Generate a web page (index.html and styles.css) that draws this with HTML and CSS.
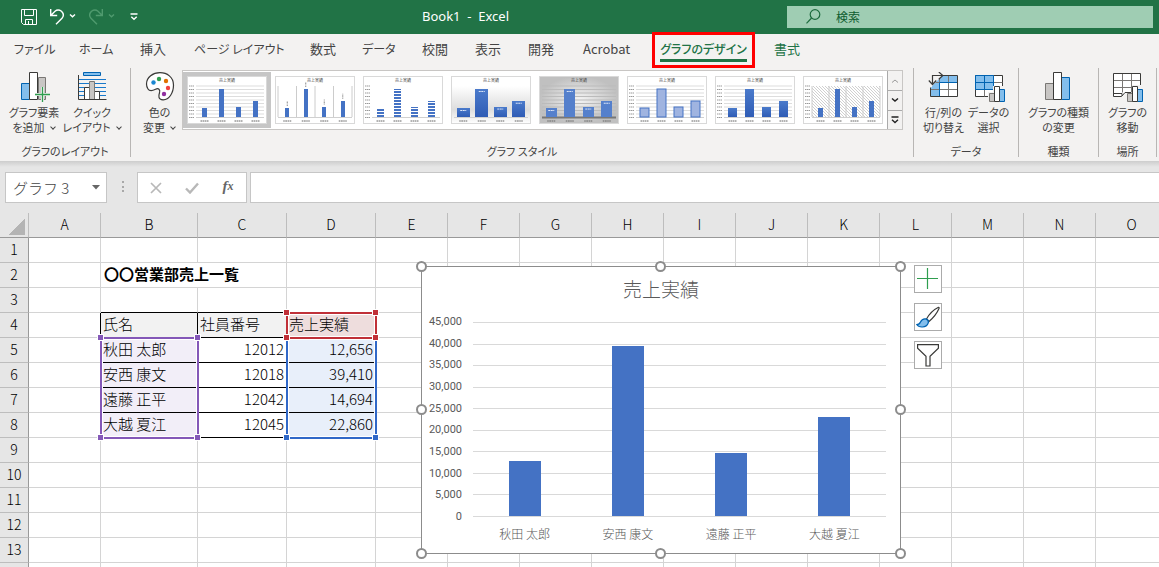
FILE: index.html
```html
<!DOCTYPE html>
<html lang="ja">
  <head>
    <meta charset="UTF-8" />
    <meta name="viewport" content="width=device-width, initial-scale=1.0" />
    <title>Book1 - Excel</title>
    <link rel="stylesheet" href="styles.css">
  </head>
  <body>
    <header class="titlebar">
      <div class="quick">
        <button aria-label="上書き保存"><svg width="16" height="16" viewBox="0 0 16 16" fill="none" stroke="#fff"><path d="M.5.5h15v15h-13l-2-2zM3.500.5v6h9v-6M4.500 15.500v-5h7v5M7.500 12v3"/></svg></button>
        <button aria-label="元に戻す"><svg width="26" height="16" viewBox="0 0 26 16" fill="none" stroke="#fff" stroke-width="1.400"><path d="M.7 0v6.500h6.500M1 6.200l4-4q3-2.500 6.500 0 3.500 3.500.5 7l-6 6M20 5.500l2.500 2.300 2.500-2.300"/></svg></button>
        <button aria-label="やり直し" disabled><svg width="26" height="16" viewBox="0 0 26 16" fill="none" stroke="#4f9a6e" stroke-width="1.400"><path d="M13.300 0v6.500H6.800M13 6.200l-4-4q-3-2.500-6.500 0-3.500 3.500-.5 7l6 6M20 5.500l2.500 2.300 2.500-2.300"/></svg></button>
        <button aria-label="クイック アクセス ツール バーのユーザー設定"><svg width="8" height="8" viewBox="0 0 8 8" fill="none" stroke="#fff" stroke-width="1.400"><path d="M.5 1h7M1.300 3.700L4 6.200l2.700-2.500"/></svg></button>
      </div>
      <div class="book">Book1&nbsp; -&nbsp; Excel</div>
      <label class="search">
        <svg width="15" height="15" viewBox="0 0 15 15" fill="none" stroke="#1c6b3d" stroke-width="1.200"><circle cx="9" cy="5.500" r="4.800"/><path d="M5.600 9L.5 14.300"/></svg>
        <input type="text" placeholder="検索" aria-label="検索">
      </label>
    </header>

    <nav class="tabs">
      <a href="#" class="kana">ファイル</a>
      <a href="#" class="kana">ホーム</a>
      <a href="#">挿入</a>
      <a href="#" class="kana">ページ レイアウト</a>
      <a href="#">数式</a>
      <a href="#" class="kana">データ</a>
      <a href="#">校閲</a>
      <a href="#">表示</a>
      <a href="#">開発</a>
      <a href="#">Acrobat</a>
      <a href="#" class="kana active"><span>グラフのデザイン</span></a>
      <a href="#" class="context">書式</a>
    </nav>

    <section class="ribbon">
      <div class="group layout">
        <div class="tools">
          <button class="tool">
            <svg width="32" height="30" viewBox="0 0 32 30"><path d="M20.500 5.500h7v22h-7z" fill="#c8c6c4" stroke="#797774"/><path d="M3.500 11.500h8v16h-8z" fill="#83beec" stroke="#0063b1"/><path d="M11.500.5h8v27h-8z" fill="#fff" stroke="#3a3a38"/><path d="M24.500 15v15M17 22.500h15" stroke="#f3f2f1" stroke-width="3"/><path d="M24.500 15v15M17 22.500h15" stroke="#2f9e4f" stroke-width="1.300"/></svg>
            <span>グラフ要素<br>を追加<i class="chev"></i></span>
          </button>
          <button class="tool">
            <svg width="32" height="30" viewBox="0 0 32 30" fill="none"><path d="M7.500.5h17v3h-17z" fill="#83beec" stroke="#0063b1"/><path d="M3 7.500h27M3 11.500h27M3 15.500h27M3 19.500h27M3 23.500h27" stroke="#1979ca"/><path d="M8.500 15.500h5v12h-5zM18.500 19.500h5v8h-5z" fill="#fff" stroke="#3a3a38"/><path d="M13.500 9.500h5v18h-5z" fill="#c8c6c4" stroke="#797774"/><path d="M2.500 3v24.500h28" stroke="#3a3a38"/></svg>
            <span>クイック<br>レイアウト<i class="chev"></i></span>
          </button>
        </div>
        <div class="caption">グラフのレイアウト</div>
      </div>

      <div class="group styles">
        <div class="tools">
          <button class="tool">
            <svg width="30" height="30" viewBox="0 0 30 30"><path d="M1.500 12C1.500 5 8 .7 15 .7S28.500 5 28.500 13c0 8-4.500 15-10.500 14.800-5-.3-4.500-4-3.500-7 1-3.500-1-5-4-3.500-3.500 1.800-6 2-7.500-.3-1-1.500-1.500-3.200-1.500-5z" fill="#fff" stroke="#3a3a38" stroke-width="1.200"/><circle cx="8.500" cy="10.500" r="2.200" fill="#1b87d1"/><circle cx="14" cy="7" r="2.200" fill="#2f9e4f"/><circle cx="21" cy="9" r="2.200" fill="#e07000"/><circle cx="23" cy="16" r="2.200" fill="#f04040"/><circle cx="19" cy="22" r="2.200" fill="#9030a0"/></svg>
            <span>色の<br>変更<i class="chev"></i></span>
          </button>
          <div class="gallery">
            <div class="thumbs" id="thumbs"></div>
            <div class="scroller">
              <button disabled aria-label="前の行"><svg width="8" height="8" viewBox="0 0 8 8" fill="none" stroke="#999"><path d="M1 5.500l3-2.500 3 2.500"/></svg></button>
              <button aria-label="次の行"><svg width="8" height="8" viewBox="0 0 8 8" fill="none" stroke="#222" stroke-width="1.500"><path d="M1 2.500L4 5l3-2.500"/></svg></button>
              <button aria-label="その他"><svg width="8" height="8" viewBox="0 0 8 8" fill="none" stroke="#222" stroke-width="1.300"><path d="M.5 1h7M1 3.700L4 6.500l3-2.800"/></svg></button>
            </div>
          </div>
        </div>
        <div class="caption">グラフ スタイル</div>
      </div>

      <div class="group data">
        <div class="tools">
          <button class="tool">
            <svg width="32" height="30" viewBox="0 0 32 30" fill="none"><path d="M2.500 3.500h27v21h-27z" fill="#fff"/><path d="M2.500 24.500v-8l9-13h18v7h-18v14z" fill="#83beec"/><path d="M11.500 3.500v21M20.500 3.500v21M2.500 10.500h27M2.500 17.500h27" stroke="#797774"/><path d="M11.500 24.500v-14h18" stroke="#0063b1"/><path d="M2.500 12v12.500h27v-21H12" stroke="#3a3a38"/><path d="M0 0h16v2L2 16H0z" fill="#f3f2f1"/><path d="M4.500 12V3.500h10M.8 8.500l3.700 4 3.700-4M10.800 0l4 3.500-4 3.700" stroke="#3a3a38" stroke-width="1.200"/></svg>
            <span>行/列の<br>切り替え</span>
          </button>
          <button class="tool">
            <svg width="32" height="30" viewBox="0 0 32 30" fill="none"><path d="M2.500 3.500h27v21h-27z" fill="#fff" stroke="#3a3a38"/><path d="M2.500 3.500h18v14h-18z" fill="#83beec"/><path d="M11.500 3.500v21M20.500 3.500v21M2.500 10.500h27M2.500 17.500h27" stroke="#797774"/><path d="M2.500 3.500h18v14h-18zM11.500 3.500v14M2.500 10.500h18" stroke="#0063b1"/><path d="M15 20h5v-6h12v16H15z" fill="#f3f2f1"/><path d="M16.500 21.500h5v8h-5z" fill="#c8c6c4" stroke="#797774"/><path d="M26.500 17.500h5v12h-5z" fill="#83beec" stroke="#0063b1"/><path d="M21.500 14.500h5v15h-5z" fill="#fff" stroke="#3a3a38"/></svg>
            <span>データの<br>選択</span>
          </button>
        </div>
        <div class="caption">データ</div>
      </div>

      <div class="group kind">
        <div class="tools">
          <button class="tool">
            <svg width="32" height="30" viewBox="0 0 32 30"><path d="M3.500 11.500h8v16h-8z" fill="#c8c6c4" stroke="#797774"/><path d="M19.500 5.500h8v22h-8z" fill="#83beec" stroke="#0063b1"/><path d="M11.500.5h8v27h-8z" fill="#fff" stroke="#3a3a38"/></svg>
            <span>グラフの種類<br>の変更</span>
          </button>
        </div>
        <div class="caption">種類</div>
      </div>

      <div class="group place">
        <div class="tools">
          <button class="tool">
            <svg width="32" height="30" viewBox="0 0 32 30" fill="none"><path d="M2.500 1.500h27v19H14l-3 4H2.500z" fill="#fff"/><path d="M11.500 1.500v19M20.500 1.500v19M2.500 8.500h27M2.500 15.500h27" stroke="#797774"/><path d="M29.500 15V1.500h-27v23h8l3.500-4h6M2.500 21.500h8.500v2.500" stroke="#3a3a38"/><path d="M15 21h6v-8h11v17H15z" fill="#f3f2f1"/><path d="M16.500 21.500h5v8h-5z" fill="#c8c6c4" stroke="#797774"/><path d="M26.500 17.500h5v12h-5z" fill="#83beec" stroke="#0063b1"/><path d="M21.500 14.500h5v15h-5z" fill="#fff" stroke="#3a3a38"/></svg>
            <span>グラフの<br>移動</span>
          </button>
        </div>
        <div class="caption">場所</div>
      </div>
    </section>

    <section class="formulabar">
      <div class="namebox">
        <input type="text" value="グラフ 3" aria-label="名前ボックス">
        <button aria-label="名前の一覧"><svg width="8" height="5" viewBox="0 0 8 5"><path d="M0 0h8L4 4.500z" fill="#666"/></svg></button>
      </div>
      <span class="grip"></span>
      <div class="fxbox">
        <button aria-label="キャンセル"><svg width="12" height="12" viewBox="0 0 12 12" stroke="#b8b8b8" stroke-width="1.700"><path d="M1 1l10 10M11 1L1 11"/></svg></button>
        <button aria-label="入力"><svg width="14" height="12" viewBox="0 0 14 12" fill="none" stroke="#b8b8b8" stroke-width="2.400"><path d="M1 6.500l4 4L13 1.500"/></svg></button>
        <button class="fx" aria-label="関数の挿入">f<small>x</small></button>
      </div>
      <input class="formula" type="text" aria-label="数式バー">
    </section>

    <main class="sheet">
      <table class="grid">
        <colgroup>
          <col class="c-head"><col class="c-std"><col class="c-name"><col class="c-data"><col class="c-data">
          <col class="c-std" span="11">
        </colgroup>
        <thead><tr id="letters"></tr></thead>
        <tbody id="rows"></tbody>
      </table>

      <div class="range purple"><i></i><i></i><i></i><i></i></div>
      <div class="range blue"><i></i><i></i><i></i><i></i></div>
      <div class="range red"><i></i><i></i><i></i><i></i></div>

      <div class="chart">
        <h2>売上実績</h2>
        <div class="plot">
          <div class="axis">
            <span>45,000</span><span>40,000</span><span>35,000</span><span>30,000</span><span>25,000</span>
            <span>20,000</span><span>15,000</span><span>10,000</span><span>5,000</span><span>0</span>
          </div>
          <div class="area">
            <div class="lines"><hr><hr><hr><hr><hr><hr><hr><hr><hr><hr></div>
            <div class="bars" id="bars"></div>
          </div>
        </div>
        <div class="names" id="names"></div>
        <b class="dot nw"></b><b class="dot n"></b><b class="dot ne"></b>
        <b class="dot w"></b><b class="dot e"></b>
        <b class="dot sw"></b><b class="dot s"></b><b class="dot se"></b>
      </div>

      <div class="chart-tools">
        <button aria-label="グラフ要素"><svg width="22" height="22" viewBox="0 0 22 22" stroke="#2f9e4f" stroke-width="1.200"><path d="M10.500 0v21M0 10.500h21"/></svg></button>
        <button aria-label="グラフ スタイル"><svg width="24" height="22" viewBox="0 0 24 22" fill="#fff" stroke="#3a3a38" stroke-width="1.200"><path d="M10.500 13Q15 5 22.500 1.300q1 .2.500 1.200Q20 9.500 13 15.500z"/><path d="M.8 18.500q2.700 0 3.700-2.500 1.500-3.500 5-3.200 3.500 1 2.800 4-1.500 4.500-6.500 4.200-3.500 0-5-2.500z" fill="#83beec" stroke="#0063b1"/></svg></button>
        <button aria-label="グラフ フィルター"><svg width="22" height="23" viewBox="0 0 22 23" fill="#fff" stroke="#3a3a38" stroke-width="1.200"><path d="M.6.600h20.800v3.600l-8.400 8v9.800H9v-9.800l-8.400-8z"/></svg></button>
      </div>
    </main>

    <script src="script.js"></script>
  </body>
</html>
```

FILE: styles.css
```css
* {
  box-sizing: border-box;
}
body {
  margin: 0;
  height: 100vh;
  overflow: hidden;
  display: flex;
  flex-direction: column;
  font-family: "Noto Sans CJK JP", "Noto Sans", sans-serif;
  font-size: 12px;
  color: #444;
  background: #fff;
}
button,
input {
  font: inherit;
  color: inherit;
  border: 0;
  padding: 0;
  background: none;
}
button {
  display: flex;
  align-items: center;
  justify-content: center;
}

/* title bar */
.titlebar {
  flex: none;
  height: 34px;
  display: grid;
  grid-template-columns: 422px 1fr 366px;
  align-items: center;
  padding-right: 6px;
  background: #217346;
  color: #fff;
}
.quick {
  display: flex;
  align-items: center;
  gap: 13px;
  padding-left: 21px;
}
.quick button:last-child {
  margin-left: 2px;
}
.book {
  font-family: "Noto Sans", sans-serif;
  font-size: 13px;
  line-height: 30px;
  padding-bottom: 2px;
}
.search {
  height: 22px;
  display: flex;
  align-items: center;
  gap: 15px;
  padding-left: 19px;
  margin-bottom: 1px;
  background: #9fcdb3;
}
.search input {
  flex: 1;
  color: #0e5c2f;
}
.search input::placeholder {
  color: #0e5c2f;
}

/* ribbon tabs */
.tabs {
  flex: none;
  height: 33px;
  display: grid;
  grid-template-columns: 65px 61px 54px 116px 52px 60px 53px 53px 55px 69px 103px auto;
  justify-content: start;
  column-gap: 0;
  padding-left: 14px;
  background: #f3f2f1;
  font-size: 13px;
  line-height: 29px;
  white-space: nowrap;
  font-feature-settings: "palt";
}
.tabs a {
  color: #444;
  text-decoration: none;
}
.tabs .kana {
  font-size: 12px;
}
.tabs .context {
  padding-left: 19px;
  color: #217346;
}
.tabs .active {
  position: relative;
  z-index: 2;
  height: 36px;
  margin-top: -2px;
  padding: 0 5px;
  border: 3px solid #f00;
  color: #217346;
  font-weight: 500;
}
.active span {
  display: block;
  height: 27px;
  line-height: 27px;
  text-align: center;
  border-bottom: 3px solid #217346;
}

/* ribbon */
.ribbon {
  flex: none;
  height: 94px;
  display: flex;
  padding: 1px 2px 4px 0;
  background: #f3f2f1;
  font-feature-settings: "palt";
}
.group {
  display: flex;
  flex-direction: column;
  justify-content: space-between;
  border-right: 1px solid #b8b6b4;
}
.layout {
  width: 131px;
}
.styles {
  flex: 1;
  min-width: 0;
}
.data {
  width: 105px;
}
.kind {
  width: 80px;
}
.place {
  width: 58px;
}
.tools {
  display: flex;
  justify-content: center;
  padding-top: 2px;
}
.layout .tools {
  justify-content: flex-start;
  padding-left: 5px;
}
.styles .tools {
  padding-right: 10px;
}
.tool {
  flex: none;
  flex-direction: column;
  padding-top: 2px;
  font-size: 11px;
  line-height: 15px;
  white-space: nowrap;
}
.layout .tool {
  width: 58px;
}
.styles .tool {
  width: 51px;
  padding-left: 6px;
}
.data .tool {
  width: 45px;
}
.tool span {
  padding-top: 3px;
}
.chev {
  display: inline-block;
  width: 4px;
  height: 4px;
  margin: 0 1px 3px 6px;
  border: solid #444;
  border-width: 0 1px 1px 0;
  transform: rotate(45deg);
}
.caption {
  text-align: center;
  font-size: 11px;
  line-height: 11px;
}
.gallery {
  flex: 1;
  min-width: 0;
  height: 60px;
  display: flex;
  border: 1px solid #c8c6c4;
  background: #fff;
}
.thumbs {
  flex: 1;
  display: flex;
  overflow: hidden;
}
.thumbs button {
  flex: none;
  width: 88px;
  height: 56px;
  margin-top: 1px;
}
.thumbs .selected {
  background: #c6c6c6;
}
.scroller {
  width: 15px;
  display: grid;
  grid-template-rows: 1fr 1fr 1fr;
  background: #f3f2f1;
}
.scroller button {
  border-left: 1px solid #aaa;
}
.scroller button + button {
  border-top: 1px solid #aaa;
}

/* formula bar */
.formulabar {
  flex: none;
  height: 52px;
  display: flex;
  align-items: flex-start;
  padding: 11px 0 0 5px;
  background: linear-gradient(#cdcdcd, #e6e6e6 6px);
}
.namebox,
.fxbox,
.formula {
  height: 31px;
  border: 1px solid #c6c6c6;
  background: #fff;
}
.namebox {
  width: 102px;
  display: flex;
  padding: 0 6px 0 7px;
}
.namebox input {
  flex: 1;
  min-width: 0;
  font-size: 15px;
  font-weight: 300;
}
.grip {
  width: 3px;
  height: 11px;
  margin: 9px 13px 0 14px;
  border-right: 2px dotted #a8a8a8;
}
.fxbox {
  width: 110px;
  display: grid;
  grid-template-columns: 1fr 1fr 1fr;
}
.fx {
  padding-bottom: 3px;
  font-family: "Liberation Serif", serif;
  font-size: 15px;
  font-style: italic;
  font-weight: bold;
  color: #666;
}
.fx small {
  font-size: 12px;
}
.formula {
  flex: 1;
  margin-left: 3px;
  border-right: 0;
}

/* worksheet */
.sheet {
  position: relative;
  flex: 1;
  min-height: 0;
  overflow: hidden;
}
.grid {
  width: 1168px;
  table-layout: fixed;
  border-collapse: separate;
  border-spacing: 0;
  color: #000;
  font-size: 15px;
  font-weight: 300;
  line-height: 22px;
}
.c-head {
  width: 29px;
}
.c-std {
  width: 72px;
}
.c-name {
  width: 97px;
}
.c-data {
  width: 89px;
}
.grid th,
.grid td {
  height: 25px;
  padding: 0 2px 2px;
  border: solid #d4d4d4;
  border-width: 0 1px 1px 0;
  white-space: nowrap;
}
.grid th {
  padding: 0 0 2px;
  background: #e6e6e6;
  border-color: #bdbdbd;
  font-size: 14px;
  font-weight: 300;
}
.grid thead th {
  border-bottom-color: #999;
}
.grid tbody th {
  border-right-color: #999;
}
.grid .corner {
  background: linear-gradient(135deg, #e6e6e6 50%, #b4b4b4 50%) 8px 5px / 17px 17px no-repeat #e6e6e6;
}
.grid .num {
  text-align: right;
}
.grid .title {
  padding-left: 3px;
  font-weight: bold;
}
.grid .over,
.grid .head,
.grid .body {
  border-bottom-color: #000;
}
.grid .head {
  border-right-color: #000;
  background: #f2f2f2;
}
.grid .edge {
  border-right-color: #000;
}
.grid .b-name {
  background: #f2eef8;
}
.grid .b-sales {
  background: #e8effa;
}
.grid .h-sales {
  background: #eedddd;
}

/* coloured source ranges lie over the cells */
.range {
  position: absolute;
  border: 2px solid;
  outline: 1px solid #fff;
  outline-offset: -3px;
}
.range i {
  position: absolute;
  width: 5px;
  height: 5px;
  background: currentColor;
  box-shadow: 0 0 0 1px #fff;
}
.range i:nth-child(1) {
  left: -4px;
  top: -4px;
}
.range i:nth-child(2) {
  right: -3px;
  top: -4px;
}
.range i:nth-child(3) {
  left: -4px;
  bottom: -3px;
}
.range i:nth-child(4) {
  right: -3px;
  bottom: -3px;
}
.purple {
  left: 100px;
  top: 124px;
  width: 99px;
  height: 102px;
  color: #8458b8;
}
.blue {
  left: 286px;
  top: 124px;
  width: 91px;
  height: 102px;
  color: #3068c8;
}
.red {
  left: 286px;
  top: 99px;
  width: 91px;
  height: 27px;
  color: #c03038;
}

/* chart floats over the cells */
.chart {
  position: absolute;
  left: 421px;
  top: 53px;
  width: 480px;
  height: 288px;
  display: flex;
  flex-direction: column;
  padding: 7px 14px 10px 7px;
  border: 1px solid #8c8c8c;
  background: #fff;
  color: #595959;
}
.chart h2 {
  margin: 0 0 18px;
  text-align: center;
  font-size: 19px;
  font-weight: 300;
  line-height: 30px;
  padding-left: 7px;
}
.plot {
  flex: 1;
  display: flex;
  gap: 11px;
}
.axis {
  width: 33px;
  display: flex;
  flex-direction: column;
  justify-content: space-between;
  align-items: flex-end;
  margin: -6px 0;
  font-family: Roboto, sans-serif;
  font-size: 11px;
  line-height: 12px;
}
.area {
  flex: 1;
  display: grid;
}
.lines,
.bars {
  grid-area: 1 / 1;
  display: flex;
}
.lines {
  flex-direction: column;
  justify-content: space-between;
}
.lines hr {
  width: 100%;
  height: 1px;
  margin: 0;
  border: 0;
  background: #d9d9d9;
}
.bars {
  align-items: flex-end;
  justify-content: space-around;
  padding-bottom: 1px;
}
.bars div {
  width: 32px;
  background: #4472c4;
}
.names {
  display: grid;
  grid-template-columns: repeat(4, 1fr);
  margin-left: 44px;
  padding-top: 8px;
  text-align: center;
  font-weight: 300;
  line-height: 18px;
}
.dot {
  position: absolute;
  width: 11px;
  height: 11px;
  border: 2px solid #8c8c8c;
  border-radius: 50%;
  background: #fff;
}
.nw,
.n,
.ne {
  top: -6px;
}
.sw,
.s,
.se {
  bottom: -6px;
}
.nw,
.w,
.sw {
  left: -6px;
}
.ne,
.e,
.se {
  right: -6px;
}
.n,
.s {
  left: calc(50% - 6px);
}
.w,
.e {
  top: calc(50% - 6px);
}
.chart-tools {
  position: absolute;
  left: 914px;
  top: 52px;
  display: grid;
  gap: 10px;
}
.chart-tools button {
  width: 28px;
  height: 28px;
  border: 1px solid #ababab;
  background: #fff;
}
```

FILE: script.js
```js
const staff = [
  ["秋田 太郎", "12012", 12656],
  ["安西 康文", "12018", 39410],
  ["遠藤 正平", "12042", 14694],
  ["大越 夏江", "12045", 22860],
];
const columns = "ABCDEFGHIJKLMNO".split("");

// cell text and classes, keyed by address
const cells = {
  B2: ["〇〇営業部売上一覧", "title"],
  B3: ["", "over"],
  C3: ["", "over"],
  D3: ["", "over"],
  A4: ["", "edge"],
  B4: ["氏名", "head"],
  C4: ["社員番号", "head"],
  D4: ["売上実績", "head h-sales"],
};
staff.forEach(([name, id, sales], i) => {
  cells["B" + (i + 5)] = [name, "body b-name"];
  cells["C" + (i + 5)] = [id, "body num"];
  cells["D" + (i + 5)] = [sales.toLocaleString("en-US"), "body num b-sales"];
});

document.getElementById("letters").innerHTML =
  '<th class="corner"></th>' + columns.map((c) => `<th>${c}</th>`).join("");

let rows = "";
for (let r = 1; r <= 14; r++) {
  rows += `<tr><th>${r < 14 ? r : ""}</th>`;
  for (let c = 0; c < columns.length; c++) {
    const [text, cls] = cells[columns[c] + r] || ["", ""];
    const span = cls === "title" ? 2 : 1;
    rows += `<td class="${cls}" colspan="${span}">${text}</td>`;
    c += span - 1;
  }
  rows += "</tr>";
}
document.getElementById("rows").innerHTML = rows;

document.getElementById("bars").innerHTML = staff
  .map((s) => `<div style="height: ${(s[2] / 45000) * 100}%"></div>`)
  .join("");
document.getElementById("names").innerHTML = staff
  .map((s) => `<span>${s[0]}</span>`)
  .join("");

// chart style gallery
const styles = [
  { bar: 5, fill: "#4472c4", lines: true, axis: true },
  { bar: 4, fill: "#4472c4", vertical: true, above: true },
  { bar: 7, fill: "url(#stripe)", axis: true },
  { bar: 13, fill: "url(#deep)", back: "url(#fade)", inside: true },
  { bar: 11, fill: "#5580cc", back: "url(#gray)", lines: true, inside: true, base: "#777" },
  { bar: 9, fill: "#a0b4e0", edge: "#4472c4", lines: true, axis: true },
  { bar: 9, fill: "url(#deep)", lines: true, axis: true },
  { bar: 5, fill: "#4472c4", lines: true, axis: true, hatch: true, vertical: true },
];

const defs = `<defs>
  <pattern id="stripe" width="8" height="3" patternUnits="userSpaceOnUse"><path d="M0 0h8v2H0z" fill="#4472c4"/></pattern>
  <pattern id="hatch" width="3" height="3" patternUnits="userSpaceOnUse"><path d="M0 0l3 3" stroke="#bbb" stroke-width=".7"/></pattern>
  <linearGradient id="deep" x2="0" y2="1"><stop stop-color="#4a7acb"/><stop offset="1" stop-color="#2f5cb5"/></linearGradient>
  <linearGradient id="fade" x2="0" y2="1"><stop offset=".2" stop-color="#fff"/><stop offset=".7" stop-color="#ddd"/><stop offset="1" stop-color="#fff"/></linearGradient>
  <radialGradient id="gray"><stop stop-color="#f4f4f4"/><stop offset="1" stop-color="#c0c0c0"/></radialGradient>
</defs>`;

function thumb(s, i) {
  const left = s.axis ? 9 : 3;
  const step = (77 - left) / 4;
  let svg = i === 0 ? defs : "";
  svg += `<rect x=".5" y=".5" width="79" height="47" fill="${s.back || "#fff"}" stroke="#d9d9d9"/>`;
  svg += '<text x="40" y="6" font-size="4" text-anchor="middle" fill="#444">売上実績</text>';
  if (s.hatch) svg += `<rect x="${left}" y="10" width="${77 - left}" height="31" fill="url(#hatch)"/>`;
  for (let n = 0; n < 10; n++) {
    const y = 41.5 - n * 3.5;
    if (s.lines && !s.hatch) svg += `<path d="M${left} ${y}h${77 - left}" stroke="${s.back ? "#bbb" : "#ddd"}"/>`;
    if (s.axis) svg += `<path d="M2 ${y}h5" stroke="#999" stroke-dasharray="1.5 .5"/>`;
  }
  if (s.vertical) {
    for (let n = 0; n < 5; n++) svg += `<path d="M${left + n * step} 10v31" stroke="#ccc"/>`;
  }
  svg += `<path d="M${left} 41.500h${77 - left}" stroke="${s.base || "#d0d0d0"}" stroke-width="${s.base ? 2 : 1}"/>`;
  staff.forEach((p, n) => {
    const h = (p[2] / 45000) * 32;
    const mid = left + step * (n + 0.5);
    svg += `<rect x="${Math.round(mid - s.bar / 2)}" y="${Math.round(41 - h)}" width="${s.bar}" height="${Math.round(h)}" fill="${s.fill}" stroke="${s.edge || "none"}"/>`;
    if (s.above) svg += `<path d="M${mid} ${39 - h}v-5" stroke="#888" stroke-dasharray="1 .5"/>`;
    if (s.inside) svg += `<path d="M${mid - 3} ${43.500 - h}h6" stroke="#dce6f8" stroke-dasharray="2 .5"/>`;
    svg += `<path d="M${mid - 4} 45h8" stroke="#666" stroke-dasharray="1.5 .5 2 .5"/>`;
  });
  return `<button class="${i === 0 ? "selected" : ""}" aria-label="スタイル ${i + 1}"><svg width="80" height="48" viewBox="0 0 80 48">${svg}</svg></button>`;
}
document.getElementById("thumbs").innerHTML = styles.map(thumb).join("");
```
